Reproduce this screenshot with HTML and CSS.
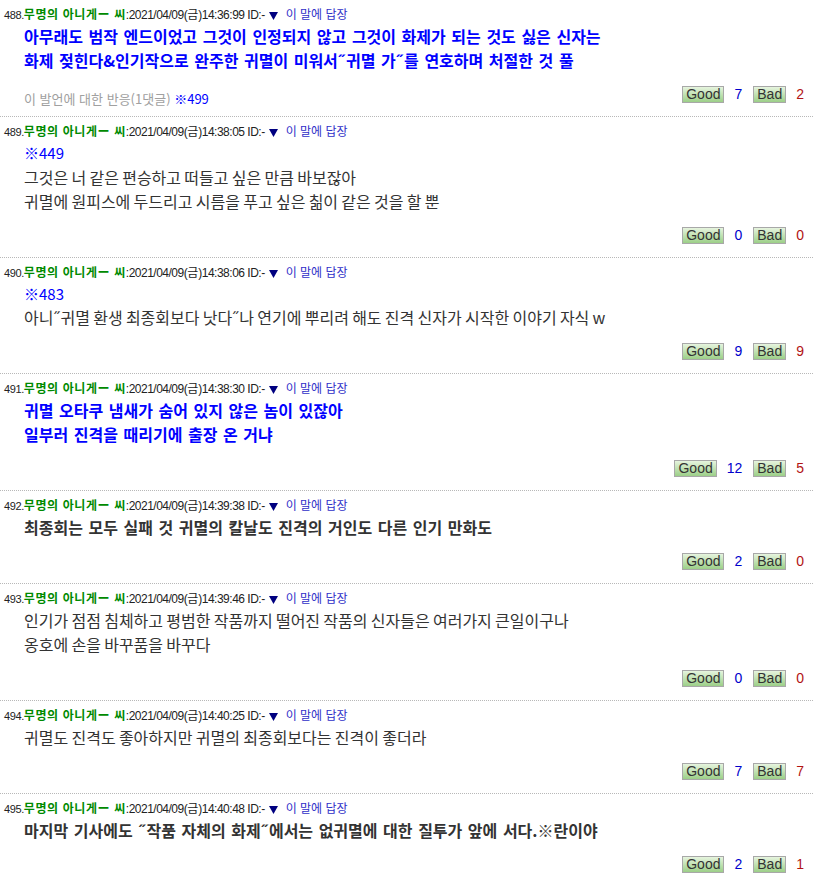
FILE: index.html
```html
<!DOCTYPE html>
<html lang="ko">
<head>
<meta charset="utf-8">
<title>게시판</title>
<link rel="stylesheet" href="styles.css">
</head>
<body>
<div class="thread">

<div class="post">
  <div class="head"><span class="no">488.</span><span class="name">무명의 아니게ー 씨</span><span class="meta">:2021/04/09(<span class="ko">금</span>)14:36:99 ID:-</span><svg class="tri" width="9" height="8" viewBox="0 0 9 8"><polygon points="0,0 9,0 4.5,8" fill="#000080"/></svg><a class="reply">이 말에 답장</a></div>
  <div class="body blue">
    <p>아무래도 범작 엔드이었고 그것이 인정되지 않고 그것이 화제가 되는 것도 싫은 신자는</p>
    <p>화제 젖힌다&amp;인기작으로 완주한 귀멸이 미워서˝귀멸 가˝를 연호하며 처절한 것 풀</p>
  </div>
  <div class="foot">
    <div class="react">이 발언에 대한 반응(1댓글) <span class="ref">※499</span></div>
    <span class="btn">Good</span><span class="cnt g">7</span><span class="btn">Bad</span><span class="cnt b">2</span>
  </div>
</div>

<div class="post">
  <div class="head"><span class="no">489.</span><span class="name">무명의 아니게ー 씨</span><span class="meta">:2021/04/09(<span class="ko">금</span>)14:38:05 ID:-</span><svg class="tri" width="9" height="8" viewBox="0 0 9 8"><polygon points="0,0 9,0 4.5,8" fill="#000080"/></svg><a class="reply">이 말에 답장</a></div>
  <div class="body">
    <p class="ref">※449</p>
    <p>그것은 너 같은 편승하고 떠들고 싶은 만큼 바보잖아</p>
    <p>귀멸에 원피스에 두드리고 시름을 푸고 싶은 칢이 같은 것을 할 뿐</p>
  </div>
  <div class="foot">
    <span class="btn">Good</span><span class="cnt g">0</span><span class="btn">Bad</span><span class="cnt b">0</span>
  </div>
</div>

<div class="post">
  <div class="head"><span class="no">490.</span><span class="name">무명의 아니게ー 씨</span><span class="meta">:2021/04/09(<span class="ko">금</span>)14:38:06 ID:-</span><svg class="tri" width="9" height="8" viewBox="0 0 9 8"><polygon points="0,0 9,0 4.5,8" fill="#000080"/></svg><a class="reply">이 말에 답장</a></div>
  <div class="body">
    <p class="ref">※483</p>
    <p>아니˝귀멸 환생 최종회보다 낫다˝나 연기에 뿌리려 해도 진격 신자가 시작한 이야기 자식 w</p>
  </div>
  <div class="foot">
    <span class="btn">Good</span><span class="cnt g">9</span><span class="btn">Bad</span><span class="cnt b">9</span>
  </div>
</div>

<div class="post">
  <div class="head"><span class="no">491.</span><span class="name">무명의 아니게ー 씨</span><span class="meta">:2021/04/09(<span class="ko">금</span>)14:38:30 ID:-</span><svg class="tri" width="9" height="8" viewBox="0 0 9 8"><polygon points="0,0 9,0 4.5,8" fill="#000080"/></svg><a class="reply">이 말에 답장</a></div>
  <div class="body blue">
    <p>귀멸 오타쿠 냄새가 숨어 있지 않은 놈이 있잖아</p>
    <p>일부러 진격을 때리기에 출장 온 거냐</p>
  </div>
  <div class="foot">
    <span class="btn">Good</span><span class="cnt g">12</span><span class="btn">Bad</span><span class="cnt b">5</span>
  </div>
</div>

<div class="post">
  <div class="head"><span class="no">492.</span><span class="name">무명의 아니게ー 씨</span><span class="meta">:2021/04/09(<span class="ko">금</span>)14:39:38 ID:-</span><svg class="tri" width="9" height="8" viewBox="0 0 9 8"><polygon points="0,0 9,0 4.5,8" fill="#000080"/></svg><a class="reply">이 말에 답장</a></div>
  <div class="body dark">
    <p>최종회는 모두 실패 것 귀멸의 칼날도 진격의 거인도 다른 인기 만화도</p>
  </div>
  <div class="foot">
    <span class="btn">Good</span><span class="cnt g">2</span><span class="btn">Bad</span><span class="cnt b">0</span>
  </div>
</div>

<div class="post">
  <div class="head"><span class="no">493.</span><span class="name">무명의 아니게ー 씨</span><span class="meta">:2021/04/09(<span class="ko">금</span>)14:39:46 ID:-</span><svg class="tri" width="9" height="8" viewBox="0 0 9 8"><polygon points="0,0 9,0 4.5,8" fill="#000080"/></svg><a class="reply">이 말에 답장</a></div>
  <div class="body">
    <p>인기가 점점 침체하고 평범한 작품까지 떨어진 작품의 신자들은 여러가지 큰일이구나</p>
    <p>옹호에 손을 바꾸품을 바꾸다</p>
  </div>
  <div class="foot">
    <span class="btn">Good</span><span class="cnt g">0</span><span class="btn">Bad</span><span class="cnt b">0</span>
  </div>
</div>

<div class="post">
  <div class="head"><span class="no">494.</span><span class="name">무명의 아니게ー 씨</span><span class="meta">:2021/04/09(<span class="ko">금</span>)14:40:25 ID:-</span><svg class="tri" width="9" height="8" viewBox="0 0 9 8"><polygon points="0,0 9,0 4.5,8" fill="#000080"/></svg><a class="reply">이 말에 답장</a></div>
  <div class="body">
    <p>귀멸도 진격도 좋아하지만 귀멸의 최종회보다는 진격이 좋더라</p>
  </div>
  <div class="foot">
    <span class="btn">Good</span><span class="cnt g">7</span><span class="btn">Bad</span><span class="cnt b">7</span>
  </div>
</div>

<div class="post">
  <div class="head"><span class="no">495.</span><span class="name">무명의 아니게ー 씨</span><span class="meta">:2021/04/09(<span class="ko">금</span>)14:40:48 ID:-</span><svg class="tri" width="9" height="8" viewBox="0 0 9 8"><polygon points="0,0 9,0 4.5,8" fill="#000080"/></svg><a class="reply">이 말에 답장</a></div>
  <div class="body dark">
    <p>마지막 기사에도 ˝작품 자체의 화제˝에서는 없귀멸에 대한 질투가 앞에 서다.※란이야</p>
  </div>
  <div class="foot">
    <span class="btn">Good</span><span class="cnt g">2</span><span class="btn">Bad</span><span class="cnt b">1</span>
  </div>
</div>

</div>
</body>
</html>
```
FILE: styles.css
```css
html, body {
  margin: 0;
  padding: 0;
  background: #fff;
}

body {
  font-family: "Noto Sans CJK KR", "Noto Sans", sans-serif;
  color: #333;
}

.post {
  border-top: 1px dotted #b8b8b8;
  padding: 6px 9px 13px 4px;
}

.post:first-child {
  border-top: none;
}

.head {
  height: 16px;
  line-height: 16px;
  font-size: 12px;
  white-space: nowrap;
  color: #222;
}

.no {
  font-family: "Liberation Sans", sans-serif;
  font-size: 11px;
  letter-spacing: -0.4px;
  color: #222;
}

.name {
  color: #008a00;
  font-weight: bold;
  font-size: 12px;
  letter-spacing: 0.6px;
}

.meta {
  font-family: "Liberation Sans", sans-serif;
  font-size: 12px;
  letter-spacing: -0.5px;
  color: #222;
}

.meta .ko {
  font-family: "Noto Sans CJK KR", sans-serif;
  letter-spacing: 0;
}

.tri {
  margin: 0 8px 0 4px;
  vertical-align: -1px;
}

.reply {
  color: #3030c8;
  font-size: 12px;
}

.body {
  padding: 2px 0 0 20px;
  font-size: 16px;
  line-height: 24px;
  word-spacing: -1.2px;
}

.body p {
  margin: 0;
  white-space: nowrap;
}

.body.blue {
  color: #0000ff;
  font-weight: bold;
  word-spacing: 1.1px;
}

.body.dark {
  color: #333;
  font-weight: bold;
  word-spacing: 1.1px;
}

.ref {
  color: #0000ff;
  font-weight: normal;
  font-size: 15px;
  word-spacing: 0;
}

.body p.ref {
  line-height: 23.5px;
}

.foot {
  display: flex;
  justify-content: flex-end;
  align-items: flex-end;
  height: 17px;
  margin-top: 14px;
}

.react {
  margin-right: auto;
  margin-left: 20px;
  margin-bottom: -4px;
  font-size: 13px;
  line-height: 17px;
  color: #a0a0a0;
  font-weight: normal;
}

.react .ref {
  font-size: 13px;
}

.btn {
  display: inline-block;
  border: 1px solid #a8a8a8;
  background: linear-gradient(#e6f4de, #9ccf88);
  font-family: "Liberation Sans", sans-serif;
  font-size: 14px;
  line-height: 15px;
  color: #333;
  padding: 0 3px;
}

.cnt {
  font-family: "Liberation Sans", sans-serif;
  font-size: 14px;
  line-height: 17px;
  margin: 0 11px 0 10px;
}

.cnt.g {
  color: #0000cc;
}

.cnt.b {
  margin-right: 0;
  color: #b21414;
}
```
